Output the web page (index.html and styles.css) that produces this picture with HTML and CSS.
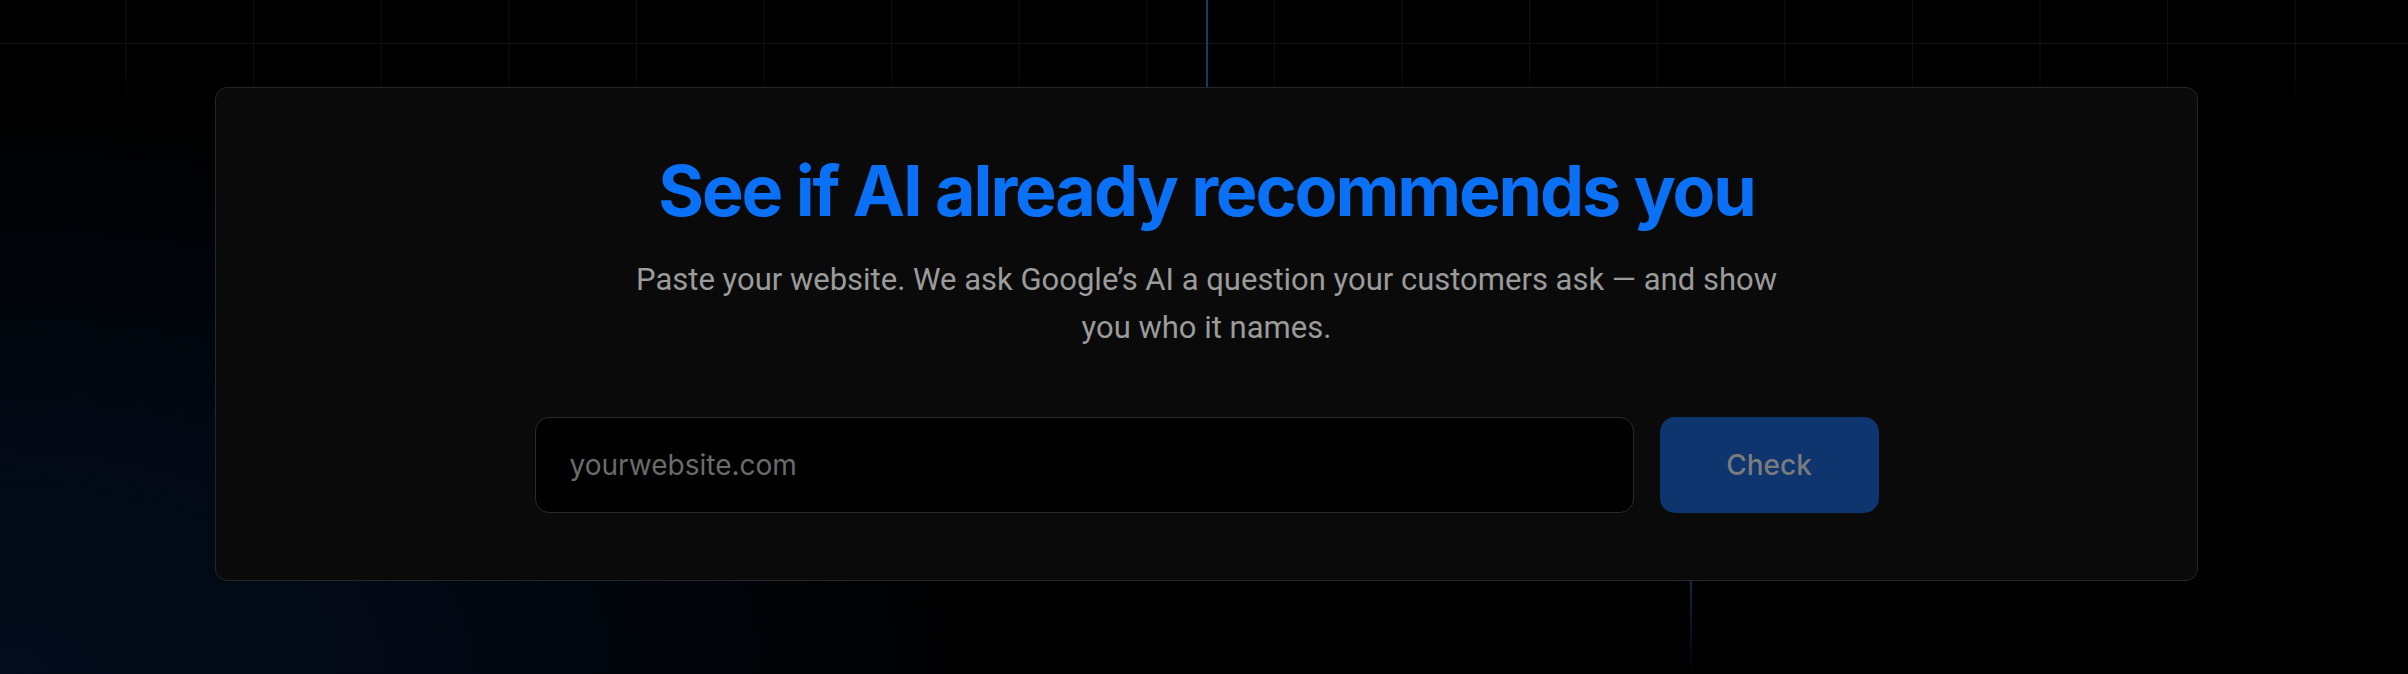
FILE: index.html
```html
<!DOCTYPE html>
<html lang="en">
<head>
    <meta charset="UTF-8">
    <meta name="viewport" content="width=device-width, initial-scale=1.0">
    <title>AI Recommendation Check</title>
    <link rel="stylesheet" href="styles.css">
</head>
<body>
    <div class="bg-grid"></div>
    <div class="beam beam-top"></div>
    <div class="beam beam-bottom"></div>

    <section class="check-section">
        <div class="check-card">
            <h2 class="check-title">See if AI already recommends you</h2>
            <p class="check-lead">Paste your website. We ask Google’s AI a question your customers ask — and show you who it names.</p>
            <form class="check-form" onsubmit="return false">
                <input class="check-input" type="text" placeholder="yourwebsite.com">
                <button class="check-btn" type="submit">Check</button>
            </form>
        </div>
    </section>
</body>
</html>
```

FILE: styles.css
```css
body {
    margin: 0;
    height: 100vh;
    overflow: hidden;
    position: relative;
    background-color: #000000;
    background-image: radial-gradient(ellipse 1100px 640px at 0% 100%, #020c1a 0%, #020914 40%, rgba(2, 8, 18, 0.5) 65%, transparent 90%);
    font-family: 'Inter', 'Liberation Sans', sans-serif;
    color: #ffffff;
}
.bg-grid {
    position: absolute;
    inset: 0;
    background-image:
        linear-gradient(to right, #111111 1px, transparent 1px),
        linear-gradient(to bottom, #121212 1px, transparent 1px);
    background-size: 127.6px 127.6px;
    background-position: -2px 43px;
    -webkit-mask-image: linear-gradient(to bottom, #000 0, #000 70px, transparent 100px);
    mask-image: linear-gradient(to bottom, #000 0, #000 70px, transparent 100px);
}
.beam {
    position: absolute;
    width: 2px;
}
.beam-top {
    left: 1206px;
    top: 0;
    height: 88px;
    background: linear-gradient(to bottom, #1b3a6c, #173866);
}
.beam-bottom {
    left: 1690px;
    top: 579px;
    height: 95px;
    background: linear-gradient(to bottom, #14284f, rgba(15, 30, 60, 0));
}
.check-section {
    position: relative;
    padding: 87px 0 0 5px;
}
.check-card {
    box-sizing: border-box;
    width: 1983px;
    margin: 0 auto;
    padding: 64px 40px 67px;
    background: #0a0a0a;
    border: 1.5px solid #262626;
    border-radius: 12px;
    text-align: center;
}
.check-title {
    margin: 0;
    font-size: 70px;
    line-height: 1.1;
    font-weight: 700;
    letter-spacing: -0.03em;
    color: #0a70f5;
}
.check-lead {
    max-width: 1150px;
    margin: 27px auto 0;
    font-family: 'Roboto', 'Liberation Sans', sans-serif;
    font-size: 31px;
    line-height: 48px;
    color: #9b9b9b;
}
.check-form {
    display: flex;
    gap: 26px;
    max-width: 1344px;
    margin: 65px auto 0;
}
.check-input {
    flex: 1;
    box-sizing: border-box;
    height: 96px;
    padding: 0 34px;
    background: #000000;
    border: 1.5px solid #2a2a2a;
    border-radius: 14px;
    font-family: 'Inter', 'Liberation Sans', sans-serif;
    font-size: 28px;
    color: #dddddd;
    outline: none;
}
.check-input::placeholder {
    color: #6b6b6b;
}
.check-btn {
    width: 219px;
    height: 96px;
    border: none;
    border-radius: 15px;
    background: #0f356e;
    color: #7b7b7b;
    font-family: 'Inter', 'Liberation Sans', sans-serif;
    font-size: 28px;
    font-weight: 500;
    cursor: pointer;
}
```
